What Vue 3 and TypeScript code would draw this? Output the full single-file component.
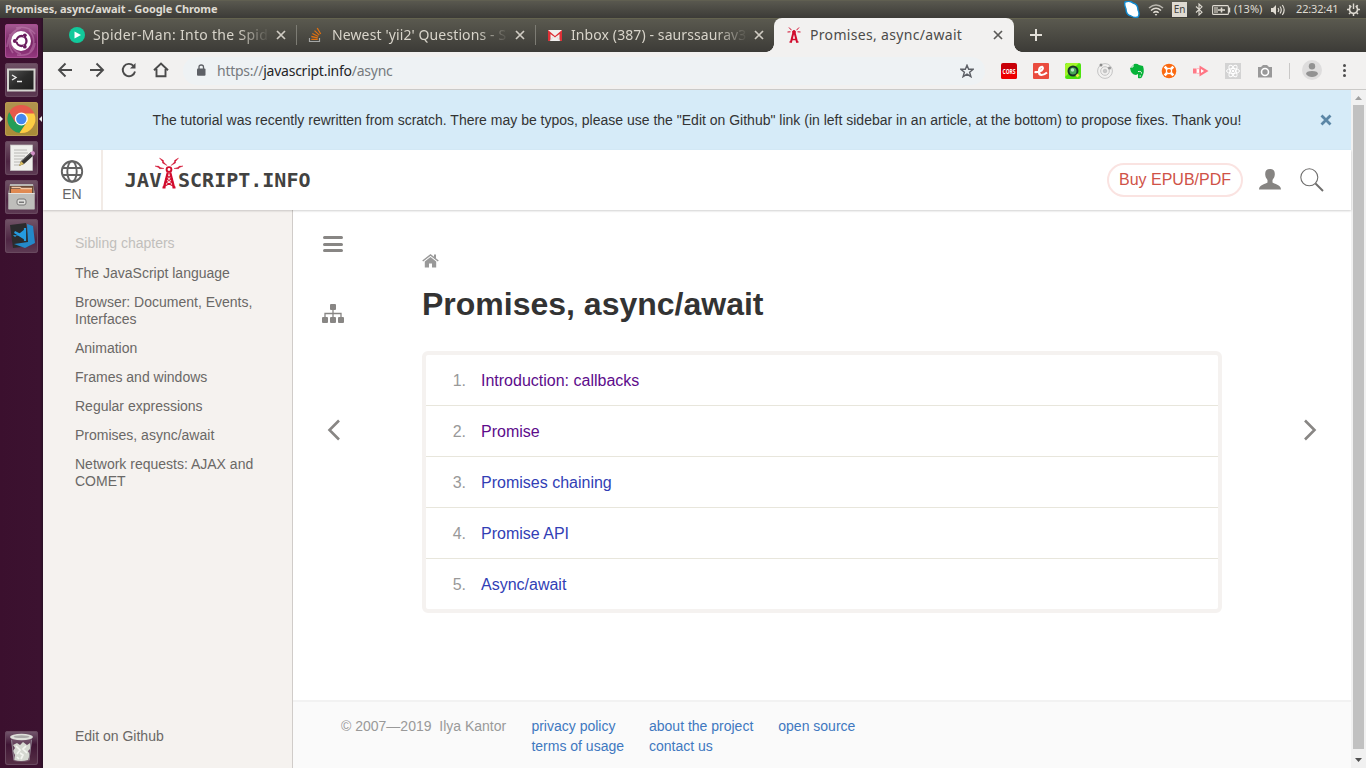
<script setup lang="ts">
interface Tab { title: string; icon: string; spacing: string; active?: boolean }
interface Chapter { title: string; visited: boolean }

const tabs: Tab[] = [
  { title: 'Spider-Man: Into the Spid', icon: 'play', spacing: '0.3px' },
  { title: "Newest 'yii2' Questions - S", icon: 'stack', spacing: '0.12px' },
  { title: 'Inbox (387) - saurssaurav3', icon: 'mail', spacing: '0.1px' },
  { title: 'Promises, async/await', icon: 'tower', spacing: '0.32px', active: true },
]
const extensions: string[] = ['cors', 'ember', 'search', 'orbit', 'evernote', 'wheel', 'arrow', 'react', 'camera']
const launchers: string[] = ['ubuntu', 'terminal', 'chrome', 'editor', 'files', 'code']
const siblings: string[] = [
  'The JavaScript language',
  'Browser: Document, Events, Interfaces',
  'Animation',
  'Frames and windows',
  'Regular expressions',
  'Promises, async/await',
  'Network requests: AJAX and COMET',
]
const chapters: Chapter[] = [
  { title: 'Introduction: callbacks', visited: true },
  { title: 'Promise', visited: true },
  { title: 'Promises chaining', visited: false },
  { title: 'Promise API', visited: false },
  { title: 'Async/await', visited: false },
]
const footerLinks: string[][] = [
  ['privacy policy', 'terms of usage'],
  ['about the project', 'contact us'],
  ['open source'],
]
</script>

<template>
  <div class="desktop">
    <header class="panel">
      <span class="panel-title">Promises, async/await - Google Chrome</span>
      <div class="indicators">
        <svg class="i-skype" width="18" height="18" viewBox="0 0 18 18"><path d="M2 1Q7-1 10 2Q15 3 15 9Q17 13 15 16Q11 17 8 15Q3 14 3 8Q1 4 2 1Z" fill="#fff" stroke="#1089cf" stroke-width="1.4" /></svg>
        <svg class="i-wifi" width="16" height="14" viewBox="0 0 16 14" fill="none" stroke="#b9b6ae" stroke-width="1.5"><path d="M1 5Q8-1 15 5" /><path d="M3 7.500Q8 3 13 7.500" stroke="#dfdbd2" /><path d="M5.300 9.800Q8 7.500 10.700 9.800" stroke="#dfdbd2" /><path d="M6.700 11L8 13L9.300 11Z" fill="#dfdbd2" stroke="none" /></svg>
        <span class="i-lang">En</span>
        <svg class="i-bt" width="8" height="13" viewBox="0 0 8 13" fill="none" stroke="#dfdbd2" stroke-width="1.100"><path d="M1 3.500L7 9.200L4 12V1L7 3.800L1 9.500" /></svg>
        <svg class="i-bat" width="19" height="10" viewBox="0 0 19 10"><rect x=".6" y=".6" width="15.800" height="8.800" rx="1" fill="none" stroke="#dfdbd2" stroke-width="1.100" /><path d="M17.500 2.500V7.500" stroke="#dfdbd2" stroke-width="1.500" /><rect x="2" y="2" width="4" height="6" fill="#9b988f" /><path d="M6 5H13M9.500 2.500V7.500" stroke="#dfdbd2" stroke-width="1.600" /></svg>
        <span class="i-pct">(13%)</span>
        <svg class="i-vol" width="16" height="12" viewBox="0 0 16 12"><path d="M1 4H3L6 1V11L3 8H1Z" fill="#dfdbd2" /><path d="M8 4Q9.500 6 8 8M10 2.500Q12.500 6 10 9.500M12.300 1Q16 6 12.300 11" fill="none" stroke="#dfdbd2" stroke-width="1.200" /></svg>
        <span class="i-time">22:32:41</span>
        <svg class="i-gear" width="13" height="13" viewBox="0 0 13 13" fill="none" stroke="#dfdbd2"><path d="M4.300 3A4 4 0 1 0 8.700 3" stroke-width="1.600" /><path d="M6.500.5V6" stroke-width="1.400" /><path d="M2.200 2.200L3.600 3.600M10.800 2.200L9.400 3.600M0 6.500H2M11 6.500H13M2 11L3.500 9.500M11 11L9.500 9.500M6.500 11V13" stroke-width="1.500" /></svg>
      </div>
    </header>

    <div class="workspace">
      <nav class="launcher">
        <div v-for="item in launchers" :key="item" class="tile" :class="item">
          <svg v-if="item === 'ubuntu'" width="33" height="34" viewBox="0 0 33 34">
            <path d="M2 23Q3 8 16 4M8 29Q-1 16 11 7M25 28Q33 16 24 6M30 10Q23 1 11 4M5 10Q4 26 16 30M12 31Q28 33 30 19" stroke="#c98cba" stroke-width="1.700" opacity=".45" fill="none" />
            <circle cx="16" cy="17" r="10" fill="#fff" /><circle cx="16.500" cy="17" r="5" fill="none" stroke="#6b1d5e" stroke-width="2.300" /><path d="M10 17H14M18.500 21L20.500 24.500M18.500 13L20.500 9.500" stroke="#fff" stroke-width="1.500" /><circle cx="9.800" cy="17" r="1.900" fill="#6b1d5e" /><circle cx="19.800" cy="11.300" r="1.900" fill="#6b1d5e" /><circle cx="19.800" cy="22.700" r="1.900" fill="#6b1d5e" />
          </svg>
          <svg v-else-if="item === 'terminal'" width="33" height="34" viewBox="0 0 33 34">
            <defs><linearGradient id="term" x2="1" y2="1"><stop stop-color="#555" /><stop offset=".5" stop-color="#2b2b2b" /><stop offset="1" stop-color="#1c1c1c" /></linearGradient></defs>
            <rect x="3" y="6.500" width="26.500" height="21" fill="url(#term)" stroke="#d5d4d0" stroke-width="2" /><path d="M7 12L11 14.500L7 17M12 18.500H17" stroke="#eee" stroke-width="1.400" fill="none" />
          </svg>
          <svg v-else-if="item === 'chrome'" width="33" height="34" viewBox="0 0 33 34">
            <circle cx="16.300" cy="17" r="14" fill="#e6594b" /><path d="M4.200 10A14 14 0 0 0 14.500 30.900L22 20L10 20Z" fill="#239e58" /><path d="M14.500 30.900A14 14 0 0 0 29.200 11.500H16.500L22 20Z" fill="#fccd43" /><circle cx="16.300" cy="17" r="6.500" fill="#fff" /><circle cx="16.300" cy="17" r="5.200" fill="#4688ef" />
          </svg>
          <svg v-else-if="item === 'editor'" width="33" height="34" viewBox="0 0 33 34">
            <rect x="5.500" y="4" width="22" height="25.500" fill="#efefec" stroke="#c7c5c3" stroke-width=".7" /><path d="M9 9H22M9 12H23M9 15H20M9 18H18M9 21H16M9 24H14" stroke="#b8b8b4" stroke-width="1" /><path d="M14 25L16 20L26 11L29 14L19 23Z" fill="#343333" /><path d="M14 25L16 20L19 23Z" fill="#d8bd63" /><path d="M25 12L27.500 10Q30 10 30 13L28 15Z" fill="#cf8fc5" /><path d="M17 20L26 12" stroke="#777" stroke-width=".7" />
          </svg>
          <svg v-else-if="item === 'files'" width="33" height="34" viewBox="0 0 33 34">
            <path d="M5 4H28L29.500 12V29H3.500V12Z" fill="#b8b7b4" /><rect x="4.500" y="6" width="24" height="9" fill="#694936" /><path d="M6 9H27V13H6Z" fill="#e08a52" /><path d="M6.500 7.500H15L16.500 8.500H27" stroke="#f1c8a6" stroke-width="1.300" fill="none" /><path d="M3.500 13H29.500V29.500H3.500Z" fill="#bebebb" /><path d="M3.500 13.500H29.500" stroke="#e3e2df" /><rect x="12" y="19" width="9" height="6" rx="2" fill="#dededb" stroke="#777" /><path d="M14 21.500H19V23H14Z" fill="#777" />
          </svg>
          <svg v-else width="33" height="34" viewBox="0 0 33 34">
            <path d="M5 6L21 4L25 27L8 29Z" fill="#2b2b2d" /><path d="M22 5L28 7L30 24L20 29L9 25L23 23Z" fill="#2489ca" /><path d="M20 10L10 18L8 16L20 17ZM20 17L10 12L9 14L20 21Z" fill="#259be0" /><path d="M20 9V22" stroke="#259be0" stroke-width="2.200" />
          </svg>
        </div>
        <div class="tile trash">
          <svg width="33" height="34" viewBox="0 0 33 34"><path d="M6 7L8.500 30Q16.500 32 24.500 30L27 7Z" fill="#c8bac7" opacity=".25" /><ellipse cx="16.500" cy="6" rx="11.500" ry="3.300" fill="#dedfda" /><ellipse cx="16.500" cy="5.700" rx="8" ry="1.400" fill="#aaa8a8" /><path d="M8 14L12 12L15 14L18 11L22 14L25 12L26 17L23 20L25 24L23 29Q16 31 9 29L10 24L8 20L10 17Z" fill="#d5d8d1" /><path d="M11 15L15 19L12 23M21 15L18 18L22 22M15 22L18 24L16 28M12 26L14 28" stroke="#f4f5f1" stroke-width="1.700" fill="none" /><path d="M6.500 9L9 29M26.500 9L24 29" stroke="#8f8390" /></svg>
        </div>
        <i class="pip left"></i><i class="pip right"></i>
      </nav>

      <main class="browser">
        <div class="tabstrip">
          <div v-for="tab in tabs" :key="tab.title" class="tab" :class="[tab.icon, { active: tab.active }]">
            <svg v-if="tab.icon === 'play'" class="favicon" viewBox="0 0 16 16"><circle cx="8" cy="8" r="8" fill="#12c99b" /><path d="M5.500 4.500L12 8L5.500 11.500Z" fill="#fff" /></svg>
            <svg v-else-if="tab.icon === 'stack'" class="favicon" viewBox="0 0 16 16" fill="none"><path d="M1.500 11V14.500H11.500V11" stroke="#a6a7a5" stroke-width="1.200" /><path d="M3.300 12.300H9.700M3.300 9.500L9.800 10.900M4.300 6.500L10.300 9.500M6.500 3.600L11.300 8.100M9.200 1L12.700 7" stroke="#e07010" stroke-width="1.300" /></svg>
            <svg v-else-if="tab.icon === 'mail'" class="favicon" viewBox="0 0 16 16"><rect x="1" y="3" width="14" height="11" fill="#f1f0ee" /><path d="M1 3L8 9L15 3V14H12.500V7L8 10.500L3.500 7V14H1Z" fill="#de3036" /><path d="M3 14L6.500 9.500M13 14L9.500 9.500" stroke="#ddd" /></svg>
            <svg v-else class="favicon" viewBox="0 0 16 16" fill="none" stroke="#d10b2c"><path d="M7.300 6L5 15M8.700 6L11 15" stroke-width="2" /><path d="M3.500 15H6M10 15H12.500M6 12.500H10" stroke-width="1.300" /><circle cx="8" cy="5" r="1.400" fill="#d10b2c" /><path d="M4.500 4.800L1.500 5M5.500 3.200L3 .5M11.500 4.800L14.500 5M10.500 3.200L13 .5" /></svg>
            <span class="tab-title" :style="{ letterSpacing: tab.spacing }">{{ tab.title }}</span>
            <svg class="close" width="10" height="10" viewBox="0 0 10 10"><path d="M1 1L9 9M9 1L1 9" /></svg>
          </div>
          <svg class="newtab" width="12" height="12" viewBox="0 0 12 12"><path d="M6 0V12M0 6H12" stroke="#e3e0d9" stroke-width="2" /></svg>
        </div>

        <div class="toolbar">
          <div class="nav-icons">
            <svg viewBox="0 0 16 16"><path d="M15 8H2M8.500 1.500L2 8L8.500 14.500" /></svg>
            <svg viewBox="0 0 16 16"><path d="M1 8H14M7.500 1.500L14 8L7.500 14.500" /></svg>
            <svg viewBox="0 0 16 16"><path d="M14 9.500A6.200 6.200 0 1 1 12.500 3.800" /><path d="M14.500 1V6.500H9Z" class="solid" /></svg>
            <svg viewBox="0 0 16 16"><path d="M1 8.300L8 1.500L15 8.300M3.500 7V14.300H12.500V7" /></svg>
          </div>
          <div class="omnibox">
            <svg class="lock" width="10" height="12" viewBox="0 0 10 12"><rect x="1" y="4.500" width="8.500" height="7.200" rx="1" fill="#5d6066" /><path d="M3 5V3Q3 1 5.200 1Q7.500 1 7.500 3V5" stroke="#5d6066" stroke-width="1.300" fill="none" /></svg>
            <span class="url">https://<b>javascript.info</b>/async</span>
            <svg class="star" width="14" height="14" viewBox="0 0 16 16"><path d="M8 1.400L9.900 6H15L11 9.300L12.500 14.500L8 11.500L3.500 14.500L5 9.300L1 6H6.100Z" fill="none" stroke="#5d6066" stroke-width="1.600" /></svg>
          </div>
          <div class="extensions">
            <div v-for="ext in extensions" :key="ext" class="ext">
              <svg v-if="ext === 'cors'" viewBox="0 0 16 16"><rect width="16" height="16" rx="2" fill="#c80008" /><path d="M0 8H16V14Q16 16 14 16H2Q0 16 0 14Z" fill="#ed0000" /><text x="8" y="10.600" text-anchor="middle" textLength="13" lengthAdjust="spacingAndGlyphs" font-family="Open Sans, sans-serif" font-weight="700" font-size="7.500" fill="#fff">CORS</text></svg>
              <svg v-else-if="ext === 'ember'" viewBox="0 0 16 16"><rect width="16" height="16" rx="1" fill="#ea4c3e" /><path d="M1.500 9Q5 9.500 8.500 7.500Q11 5 9 3.800Q6 4 6 8.500Q6 12 8.500 12Q11 12 14 9.500" stroke="#fff" stroke-width="2.200" fill="none" /></svg>
              <svg v-else-if="ext === 'search'" viewBox="0 0 16 16"><rect width="16" height="16" rx="2" fill="#4ee310" /><path d="M2 0H14L0 14V2Z" fill="#a3f62a" /><circle cx="8" cy="8" r="4.500" fill="#49a857" stroke="#16332a" stroke-width="2" /><circle cx="7.500" cy="7" r="1.700" fill="#b7e7c4" /><path d="M11.500 11.500L13.500 13.500" stroke="#e8e844" stroke-width="3" /></svg>
              <svg v-else-if="ext === 'orbit'" viewBox="0 0 16 16" fill="none" stroke="#c4c4c4"><circle cx="8" cy="8" r="7.400" /><circle cx="8" cy="8" r="4.300" /><circle cx="8" cy="8" r="1.800" fill="#c8c8c8" /><circle cx="4" cy="2" r="1.500" fill="#8b8b8b" stroke="none" /><circle cx="12.500" cy="5" r="1.600" fill="#999" stroke="none" /></svg>
              <svg v-else-if="ext === 'evernote'" viewBox="0 0 16 16"><path d="M1 5L5 1Q8 0 10 2L14 3Q16 9 13 14Q12 16 9 15V11L7 12Q2 12 1 5Z" fill="#07b339" /><path d="M1 4H4V1M9 8.500Q13 8 12.500 10.500M10.500 13H12" stroke="#f2f1f0" fill="none" /></svg>
              <svg v-else-if="ext === 'wheel'" viewBox="0 0 16 16"><circle cx="8" cy="8" r="7.300" fill="#fb6910" /><path d="M3.700 3.700L6 6M12.300 3.700L10 6M3.700 12.300L6 10M12.300 12.300L10 10" stroke="#fff" stroke-width="2.600" /><circle cx="8" cy="8" r="2.600" fill="#fb6910" stroke="#fff" stroke-width="1.200" /></svg>
              <svg v-else-if="ext === 'arrow'" viewBox="0 0 16 16"><path d="M0 5.500H3V10.500H0Z" fill="#ff7a87" /><path d="M3.500 5.700H6.500V10.300H3.500Z" fill="#fff" stroke="#ffb0b8" /><path d="M6.500 2.500L15.500 8L6.500 13.500Z" fill="#ff7684" /><path d="M8 6L11 8L8 10Z" fill="#fff" /></svg>
              <svg v-else-if="ext === 'react'" viewBox="0 0 16 16"><rect width="16" height="16" fill="#d3d3d3" /><g fill="none" stroke="#fff"><ellipse cx="8" cy="8" rx="6.500" ry="2.500" /><ellipse cx="8" cy="8" rx="6.500" ry="2.500" transform="rotate(60 8 8)" /><ellipse cx="8" cy="8" rx="6.500" ry="2.500" transform="rotate(120 8 8)" /></g><circle cx="8" cy="8" r="1.300" fill="#fff" /></svg>
              <svg v-else viewBox="0 0 16 16"><path d="M1 4H4L6 2H10L12 4H15V14.500H1Z" fill="#999" /><circle cx="8" cy="9" r="3.500" fill="#999" stroke="#fff" stroke-width="1.600" /></svg>
            </div>
          </div>
          <i class="divider"></i>
          <svg class="avatar" width="20" height="20" viewBox="0 0 20 20"><circle cx="10" cy="10" r="10" fill="#dedddd" /><circle cx="10" cy="6.300" r="3.200" fill="#929292" /><path d="M4 14Q4 11 10 11Q16 11 16 14Q14 17 10 17Q6 17 4 14Z" fill="#929292" /></svg>
          <div class="kebab"><i></i><i></i><i></i></div>
        </div>

        <div class="viewport">
          <div class="page">
            <div class="banner">
              <p>The tutorial was recently rewritten from scratch. There may be typos, please use the "Edit on Github" link (in left sidebar in an article, at the bottom) to propose fixes. Thank you!</p>
              <svg width="12" height="12" viewBox="0 0 12 12"><path d="M1.500 1.500L10.500 10.500M10.500 1.500L1.500 10.500" stroke="#5b86a6" stroke-width="2.800" /></svg>
            </div>

            <div class="site-header">
              <div class="lang">
                <svg width="24" height="24" viewBox="0 0 24 24" fill="none" stroke="#646464" stroke-width="1.900"><circle cx="12" cy="12.500" r="10.200" /><ellipse cx="12" cy="12.500" rx="4.700" ry="10.200" /><path d="M3 9H21M3 16H21" /></svg>
                <span>EN</span>
              </div>
              <svg class="logo" width="190" height="34" viewBox="0 0 190 34">
                <g font-family="DejaVu Sans Mono, monospace" font-weight="700" font-size="19" fill="#424241"><text x="-.5" y="31" textLength="37" lengthAdjust="spacingAndGlyphs">JAV</text><text x="53" y="31" textLength="132.500" lengthAdjust="spacingAndGlyphs">SCRIPT.INFO</text></g>
                <g fill="none" stroke="#d10b2c"><circle cx="44" cy="13.500" r="2.400" stroke-width="1.900" /><path d="M42.800 16.500L39 31.500M45.200 16.500L49 31.500" stroke-width="2.300" /><path d="M37.500 31.500H40.500M47.500 31.500H50.500" stroke-width="2" /><path d="M42 20L47 23L40.500 26L49 30.500M46 20L41 23L47.500 26L39 30.500" stroke-width="1.100" /></g>
                <path d="M34.500 2L38.500 4.500L38.500 6L42 9.500L37.500 7L37.500 5.500ZM53.500 2L49.500 4.500L49.500 6L46 9.500L50.500 7L50.500 5.500ZM30 10L34 10.300L35 11.500L39 12.500L34.500 12.700L33.500 11.500ZM58 10L54 10.300L53 11.500L49 12.500L53.500 12.700L54.500 11.500Z" fill="#d10b2c" stroke="#d10b2c" stroke-width=".4" />
              </svg>
              <a class="buy">Buy EPUB/PDF</a>
              <svg class="user" width="22" height="21" viewBox="0 0 22 21"><path d="M11 0C7.500 0 6 2 6.200 5.500C6.300 8 7.500 9.500 8.500 11V13.500C7 15 0 15.500 0 20.500H22C22 15.500 15 15 13.500 13.500V11C14.500 9.500 15.700 8 15.800 5.500C16 2 14.500 0 11 0Z" fill="#868482" /></svg>
              <svg class="search" width="24" height="24" viewBox="0 0 24 24" fill="none" stroke="#6f6e6d"><circle cx="9.300" cy="9.300" r="8.500" stroke-width="1.100" /><path d="M15.500 15.500L23 23" stroke-width="2" /></svg>
            </div>

            <div class="content">
              <aside class="sidebar">
                <h4>Sibling chapters</h4>
                <ul><li v-for="name in siblings" :key="name">{{ name }}</li></ul>
                <a class="edit">Edit on Github</a>
              </aside>
              <div class="column">
                <section class="article">
                  <div class="side-left">
                    <svg class="menu" width="20" height="16" viewBox="0 0 20 16"><path d="M1.500 1.500H18.500M1.500 8.500H18.500M1.500 14.500H18.500" stroke="#888684" stroke-width="3" stroke-linecap="round" /></svg>
                    <svg class="sitemap" width="22" height="20" viewBox="0 0 22 20"><g fill="#888684"><rect x="8" y="0" width="6" height="6" rx="1" /><rect x="0" y="13" width="6" height="6" rx="1" /><rect x="8" y="13" width="6" height="6" rx="1" /><rect x="16" y="13" width="6" height="6" rx="1" /></g><path d="M11 6V13M3 13V9.500H19V13" fill="none" stroke="#888684" stroke-width="1.300" /></svg>
                    <svg class="prev" width="14" height="22" viewBox="0 0 14 22"><path d="M12 1.500L2.500 11L12 20.500" fill="none" stroke="#888684" stroke-width="2.600" /></svg>
                  </div>
                  <div class="lesson">
                    <svg class="home" width="17" height="14" viewBox="0 0 17 14"><path d="M.7 7L8.500 1L16.300 7" fill="none" stroke="#999" stroke-width="1.500" /><path d="M2.800 7.500L8.500 3L14.200 7.500V13.500H10V9.500H7V13.500H2.800ZM12 .5H14V5L12 3.500Z" fill="#999" /></svg>
                    <h1>Promises, async/await</h1>
                    <div class="chapters">
                      <div v-for="(chapter, i) in chapters" :key="chapter.title" class="row">
                        <span class="num">{{ i + 1 }}.</span>
                        <a :class="{ visited: chapter.visited }">{{ chapter.title }}</a>
                      </div>
                    </div>
                  </div>
                  <svg class="next" width="14" height="22" viewBox="0 0 14 22"><path d="M2 1.500L11.500 11L2 20.500" fill="none" stroke="#888684" stroke-width="2.600" /></svg>
                </section>
                <footer>
                  <span class="copy">© 2007—2019&nbsp; Ilya Kantor</span>
                  <div v-for="(group, i) in footerLinks" :key="i" class="links"><a v-for="link in group" :key="link">{{ link }}</a></div>
                </footer>
              </div>
            </div>
          </div>
          <div class="scrollbar">
            <svg width="15" height="15" viewBox="0 0 15 15"><path d="M4 10L7.500 6L11 10Z" fill="#a0a0a0" /></svg>
            <div class="thumb"></div>
            <svg class="down" width="15" height="19" viewBox="0 0 15 19"><path d="M4 9L7.500 13L11 9Z" fill="#505050" /></svg>
          </div>
        </div>
      </main>
    </div>
  </div>
</template>

<style>
html, body { margin: 0; overflow: hidden; }
</style>

<style scoped>
* { box-sizing: border-box; }
svg { display: block; flex: none; }
.desktop { width: 1366px; height: 768px; overflow: hidden; display: flex; flex-direction: column; font-family: "Liberation Sans", Arial, sans-serif; color: #333; }
.panel { height: 18px; flex: none; display: flex; align-items: center; justify-content: space-between; padding: 0 6px 0 5px; background: linear-gradient(#59584f, #3c3b37); border-top: 1px solid #605f51; font-family: "Noto Sans", sans-serif; color: #dfdbd2; }
.panel-title { font-size: 11px; font-weight: 700; letter-spacing: -0.1px; line-height: 15px; margin-top: -2px; white-space: pre; }
.indicators { display: flex; align-items: center; font-size: 12px; }
.i-skype { margin-right: 7px; }
.i-wifi { margin-right: 8px; }
.i-lang { width: 15px; height: 15px; background: #dfdbd2; color: #45433f; font-size: 10px; line-height: 15px; text-align: center; margin-right: 8px; }
.i-bt { margin-right: 9px; }
.i-bat { margin-right: 3px; }
.i-pct { width: 29px; font-size: 11px; line-height: 15px; margin: -2px 7px 0 0; }
.i-vol { margin-right: 10px; }
.i-time { width: 42px; margin: -2px 9px 0 0; font-size: 11px; line-height: 15px; letter-spacing: -0.15px; }

.workspace { flex: 1; min-height: 0; display: flex; }
.launcher { position: relative; width: 43px; flex: none; display: flex; flex-direction: column; gap: 5px; padding: 6px 0 3px 5px; background: linear-gradient(90deg, #3b102e, #3c1230 92%, #2a1026); }
.tile { width: 33px; height: 34px; border-radius: 3px; background: linear-gradient(#725568, #4e2643 60%, #5e3b54); box-shadow: inset 0 0 0 1px #69495f; }
.tile.ubuntu { background: linear-gradient(#a65c94, #782565 55%, #95397f); box-shadow: inset 0 0 0 1px #a94e92; }
.tile.chrome { background: linear-gradient(#b0934f, #a98b37); box-shadow: inset 0 0 0 1px #b89a50; }
.tile.trash { margin-top: auto; background: linear-gradient(#765a70, #3f1534 40%, #573047); }
.pip { position: absolute; top: 98px; border: 3px solid transparent; }
.pip.left { left: 0; border-left-color: #eee; border-right-width: 0; }
.pip.right { right: 1px; border-right-color: #eee; border-left-width: 0; }
.browser { flex: 1; min-width: 0; display: flex; flex-direction: column; }
.tabstrip { height: 34px; flex: none; display: flex; align-items: center; padding-left: 15px; background: linear-gradient(#5a594f, #3c3b37); border-top: 1px solid #64634f; font-family: "Noto Sans", sans-serif; }
.tab { position: relative; width: 239px; height: 34px; margin-top: -1px; display: flex; align-items: center; padding-left: 11px; color: #d8d4ca; }
.tab.play::after, .tab.stack::after { content: ""; position: absolute; right: 0; top: 7px; width: 1px; height: 20px; background: #7d7c74; }
.favicon { width: 16px; height: 16px; margin-right: 8px; }
.tab-title { width: 177px; white-space: pre; font-size: 14px; line-height: 22px; -webkit-mask-image: linear-gradient(90deg, #000 145px, transparent 177px); mask-image: linear-gradient(90deg, #000 145px, transparent 177px); }
.active .tab-title { -webkit-mask-image: none; mask-image: none; }
.close { margin-left: 6px; fill: none; stroke: #d0ccc3; stroke-width: 1.700; }
.tab.active { background: #f2f1f0; color: #4c4b49; border-radius: 8px 8px 0 0; width: 240px; margin-left: -1px; padding-left: 12px; }
.tab.active::before, .tab.active::after { content: ""; position: absolute; bottom: 0; width: 8px; height: 8px; }
.tab.active::before { left: -8px; background: radial-gradient(circle at 0 0, transparent 7.500px, #f2f1f0 8px); }
.tab.active::after { right: -8px; background: radial-gradient(circle at 100% 0, transparent 7.500px, #f2f1f0 8px); }
.active .close { stroke: #5b5a58; }
.newtab { margin-left: 16px; margin-top: -1px; }
.toolbar { height: 38px; flex: none; display: flex; align-items: center; background: #f2f1f0; border-bottom: 1px solid #cbcac8; padding-left: 14px; }
.nav-icons { display: flex; gap: 16px; margin-top: -1px; }
.nav-icons svg { width: 16px; height: 16px; fill: none; stroke: #4a4a4a; stroke-width: 1.900; }
.nav-icons .solid { fill: #4a4a4a; stroke: none; }
.omnibox { width: 802px; height: 28px; margin-left: 14px; border-radius: 14px; background: #eef2f4; display: flex; align-items: center; padding: 0 11px 0 13px; }
.lock { margin-top: -1px; }
.url { margin-left: 11px; font-family: "Noto Sans", sans-serif; font-size: 14px; letter-spacing: -0.25px; color: #777a7e; white-space: pre; }
.url b { font-weight: 400; color: #242527; }
.star { margin-left: auto; }
.extensions { display: flex; gap: 16px; margin-left: 16px; }
.ext svg { width: 16px; height: 16px; }
.divider { width: 1px; height: 16px; background: #c9c8c7; margin: 0 12px 0 16px; }
.avatar { margin-top: -2px; }
.kebab { display: flex; flex-direction: column; gap: 2px; margin-left: 21px; }
.kebab i { width: 3px; height: 3px; border-radius: 50%; background: #4e4e4e; }

.viewport { flex: 1; min-height: 0; display: flex; }
.page { width: 1308px; display: flex; flex-direction: column; background: #fff; }
.banner { height: 60px; flex: none; display: flex; align-items: center; background: #d6ebf8; padding: 0 19px 0 109.6px; font-size: 14px; }
.banner p { margin: 0; white-space: nowrap; }
.banner svg { margin-left: auto; }
.site-header { position: relative; height: 60px; flex: none; display: flex; align-items: center; background: #fff; box-shadow: 0 1px 2px #00000030; padding-right: 27px; }
.lang { width: 60px; height: 60px; border-right: 2px solid #f2ebe6; display: flex; flex-direction: column; align-items: center; padding-top: 9px; color: #666; font-size: 14px; line-height: 16px; }
.lang span { margin-top: 3px; }
.logo { margin: 6px 0 0 22px; align-self: flex-start; }
.buy { width: 136px; height: 34px; margin-left: auto; border: 2px solid #fae3e1; border-radius: 17px; color: #cf5247; font-size: 16px; line-height: 29px; text-align: center; }
.user { margin: -2px 19px 0 16px; }
.content { flex: 1; min-height: 0; display: flex; }
.sidebar { width: 250px; flex: none; background: #f5f2ef; border-right: 1px solid #d0ccc9; display: flex; flex-direction: column; padding: 25px 20px 23px 32px; font-size: 14px; line-height: 17px; color: #6a6866; }
.sidebar h4 { margin: 0 0 13px; font-size: 14px; font-weight: 400; color: #c1bfbc; }
.sidebar ul { list-style: none; margin: 0; padding: 0; display: flex; flex-direction: column; gap: 12px; }
.edit { margin-top: auto; }
.column { flex: 1; min-width: 0; display: flex; flex-direction: column; }
.article { flex: 1; min-height: 0; display: flex; }
.side-left { width: 129px; padding-top: 26px; padding-left: 29px; display: flex; flex-direction: column; }
.menu { margin-left: 1px; }
.sitemap { margin-top: 52px; }
.prev { margin: 95px 0 0 5px; }
.lesson { width: 800px; padding-top: 44px; }
.home { margin-top: -.5px; }
h1 { margin: 14.5px 0 0; font-size: 32px; line-height: 44px; color: #333; }
.chapters { margin-top: 25px; border: 4px solid #f5f2f0; border-radius: 6px; }
.row { height: 51px; display: flex; align-items: center; padding-top: 2px; font-size: 16px; color: #999; border-bottom: 1px solid #e8e6dc; }
.row:last-child { height: 50px; border-bottom: 0; }
.num { width: 40px; text-align: right; margin-right: 15px; }
.row a { color: #313eb5; }
.row a.visited { color: #5d0c8b; }
.next { margin: 209px 0 0 81px; }
footer { height: 68px; flex: none; display: flex; background: #fafafa; border-top: 2px solid #f2f2f2; padding: 14px 0 0 48px; font-size: 14px; line-height: 20px; color: #999; }
.copy { width: 190.4px; }
.links { display: flex; flex-direction: column; margin-right: 25px; color: #4078c0; }
.scrollbar { width: 15px; display: flex; flex-direction: column; background: #f1f1f1; }
.thumb { flex: 1; width: 11px; margin-left: 2px; background: #c1c1c1; }
</style>
